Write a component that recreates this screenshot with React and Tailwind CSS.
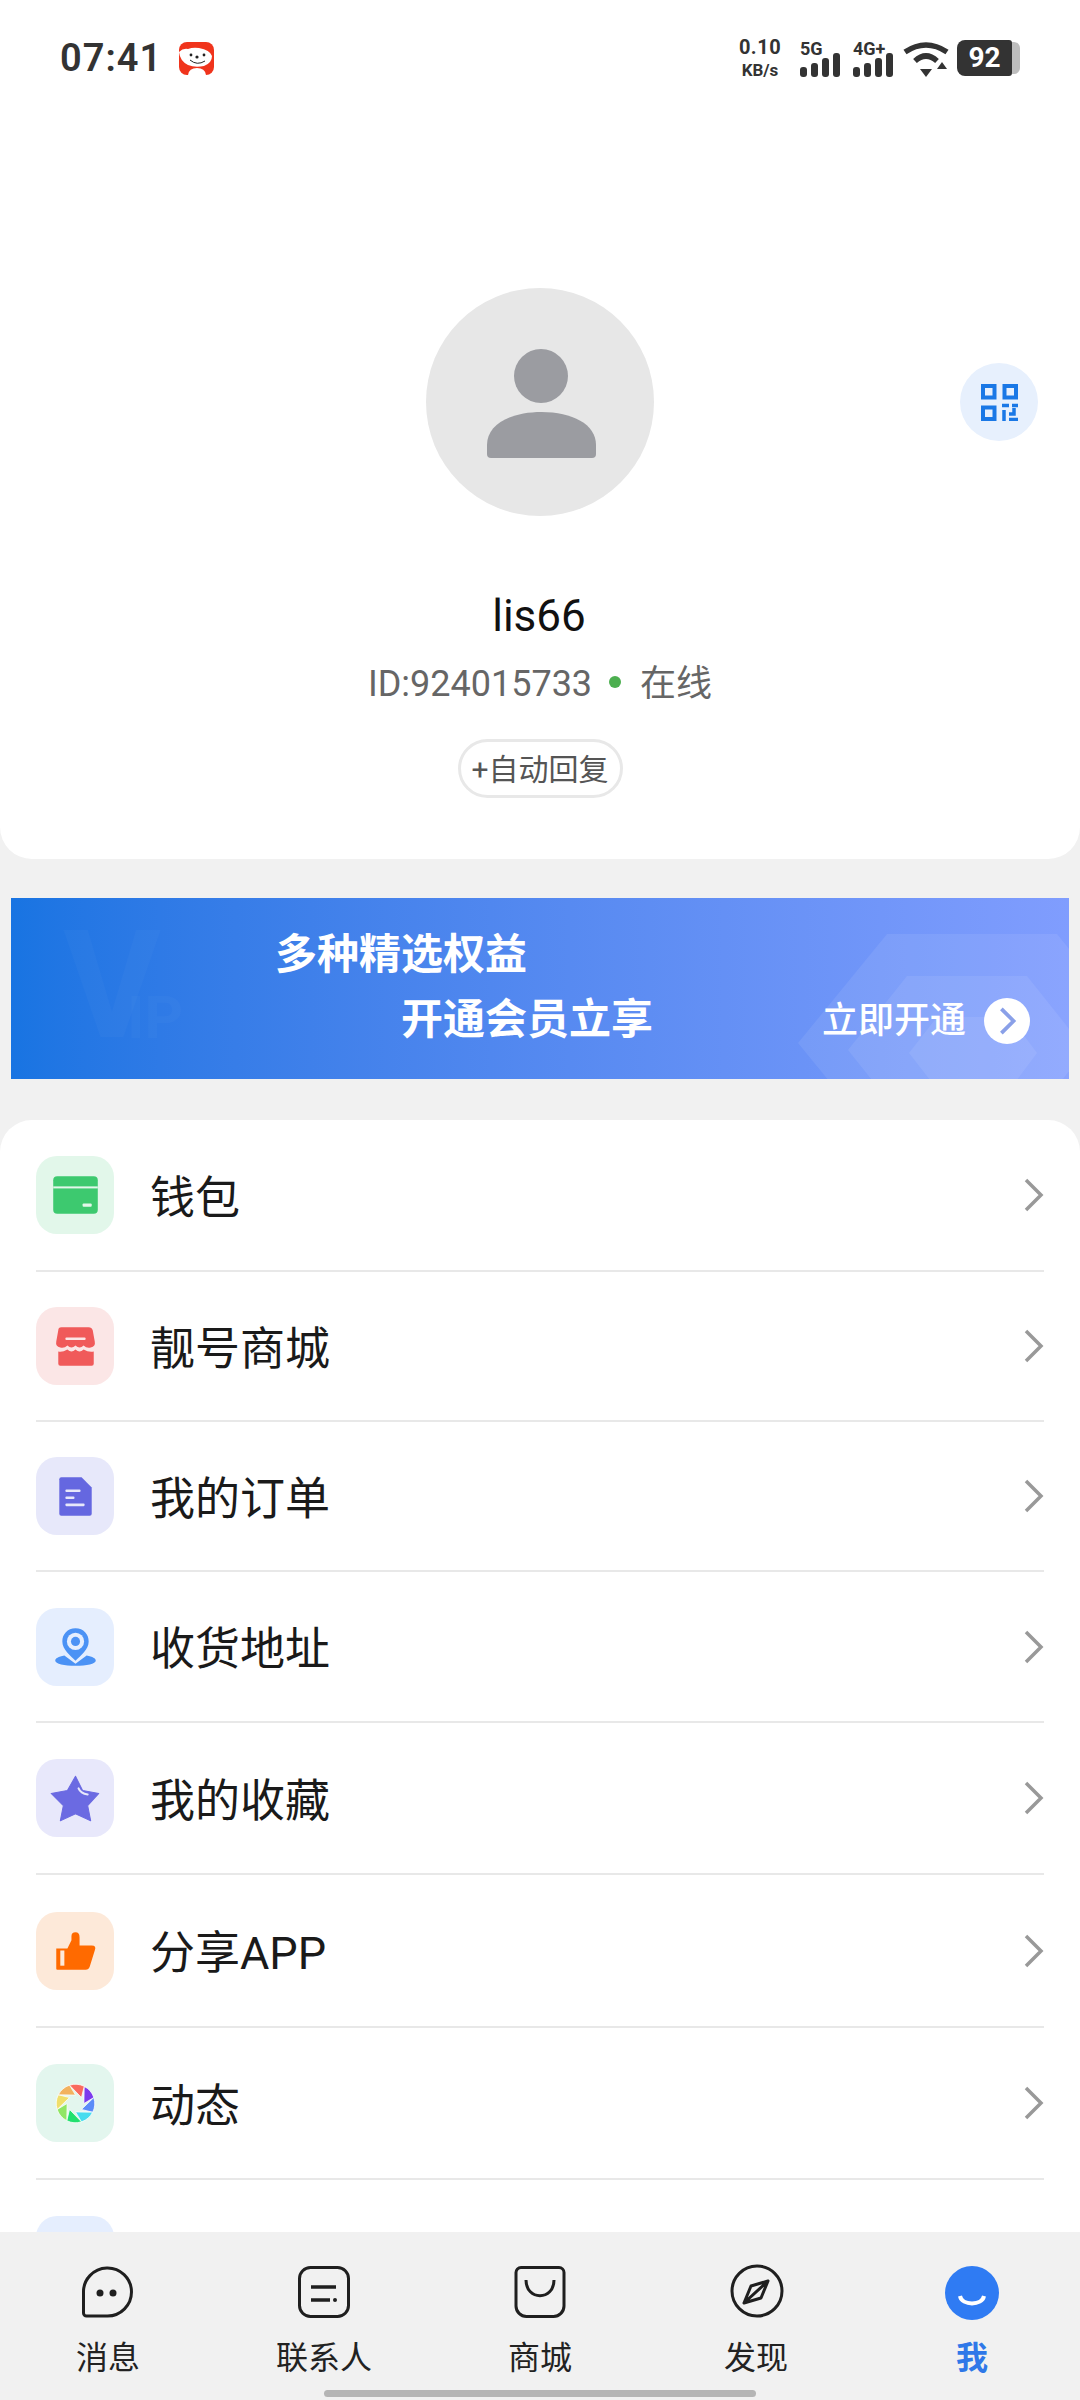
import React from 'react';

const rows = [
  { key: 'wallet', label: '钱包', bg: 'bg-[#e2f7ea]', h: 'h-[152px]' },
  { key: 'shop', label: '靓号商城', bg: 'bg-[#fbe6e6]', h: 'h-[150px]' },
  { key: 'order', label: '我的订单', bg: 'bg-[#e7e8fa]', h: 'h-[150px]' },
  { key: 'address', label: '收货地址', bg: 'bg-[#e5eefe]', h: 'h-[151px]' },
  { key: 'star', label: '我的收藏', bg: 'bg-[#e8e8fb]', h: 'h-[152px]' },
  { key: 'share', label: '分享APP', bg: 'bg-[#fde9d9]', h: 'h-[153px]' },
  { key: 'moments', label: '动态', bg: 'bg-[#e3f6ee]', h: 'h-[152px]' },
];

const blades = ['#7c3aed', '#5b8cf8', '#46dcef', '#22e06f', '#90e665', '#f0de6a', '#f2b25f', '#f96a5e'];

const RowIcon = ({ name }) => {
  if (name === 'wallet') {
    return (
      <svg viewBox="0 0 77 77" className="w-full h-full">
        <rect x="17" y="20" width="44" height="37" rx="4" fill="#3dc96f" />
        <rect x="17" y="30" width="44" height="2" fill="#e2f7ea" />
        <rect x="46" y="47" width="9" height="3" rx="1" fill="#e2f7ea" />
      </svg>
    );
  }
  if (name === 'shop') {
    return (
      <svg viewBox="0 0 77 77" className="w-full h-full">
        <path d="M25 20 H52 Q55 20 56 23 L58 34 Q59 39 54 40 Q50 41 47 38 Q43 42 39 38 Q35 42 31 38 Q28 41 24 40 Q19 39 20 34 L22 23 Q22 20 25 20 Z" fill="#f05a5a" />
        <path d="M22 44 Q26 45 31 42 Q35 46 39 42 Q43 46 47 42 Q52 45 57 44 V56 Q57 58 55 58 H24 Q22 58 22 56 Z" fill="#f05a5a" />
        <rect x="29" y="30" width="20" height="2.5" rx="1" fill="#fbe6e6" />
      </svg>
    );
  }
  if (name === 'order') {
    return (
      <svg viewBox="0 0 77 77" className="w-full h-full">
        <path d="M25 20 H45 L55 30 V56 Q55 58 53 58 H25 Q23 58 23 56 V22 Q23 20 25 20 Z" fill="#6567e0" />
        <rect x="29" y="32" width="15" height="2.5" rx="1" fill="#e7e8fa" />
        <rect x="29" y="39" width="9" height="2.5" rx="1" fill="#e7e8fa" />
        <rect x="29" y="46" width="19" height="2.5" rx="1" fill="#e7e8fa" />
      </svg>
    );
  }
  if (name === 'address') {
    return (
      <svg viewBox="0 0 77 77" className="w-full h-full">
        <path d="M28 47 C22 48 19 50 19 52 C19 55 28 57 39 57 C50 57 59 55 59 52 C59 50 56 48 50 47 L39 55 Z" fill="#4b92f5" />
        <path d="M39 20 C31 20 26 26 26 33 C26 41 34 47 39 52 C44 47 52 41 52 33 C52 26 47 20 39 20 Z" fill="#4b92f5" />
        <circle cx="39" cy="33" r="8.5" fill="#e5eefe" />
        <circle cx="39" cy="33" r="4.5" fill="#4b92f5" />
      </svg>
    );
  }
  if (name === 'star') {
    return (
      <svg viewBox="0 0 77 77" className="w-full h-full">
        <path d="M39 17 L46 31 L62 34 L51 46 L54 61 L39 54 L24 61 L27 46 L15 34 L31 31 Z" fill="#6b6ae2" stroke="#6b6ae2" strokeWidth="1" strokeLinejoin="round" />
        <path d="M42 29 Q44 34 51 35" stroke="#e8e8fb" strokeWidth="2" fill="none" strokeLinecap="round" />
      </svg>
    );
  }
  if (name === 'share') {
    return (
      <svg viewBox="0 0 77 77" className="w-full h-full">
        <path d="M20 36 H31 L35 28 V24 Q35 20 39 20 Q43 20 43 25 V33 H55 Q60 33 58 38 L53 54 Q52 57 49 57 H21 Q20 57 20 56 Z" fill="#ff6a00" />
        <rect x="24" y="38" width="4" height="15" fill="#fde9d9" />
      </svg>
    );
  }
  return (
    <svg viewBox="0 0 77 77" className="w-full h-full">
      {blades.map((color, i) => (
        <path
          key={color}
          d="M47.6 22.1 A19 19 0 0 1 57.1 33.1 L47.3 39 Z"
          fill={color}
          stroke="#ffffff"
          strokeWidth="0.7"
          transform={`rotate(${i * 45} 39 39)`}
        />
      ))}
    </svg>
  );
};

const Signal = ({ label, w }) => (
  <div className={`flex flex-col ${w}`}>
    <span className="text-[18px] leading-none font-bold text-[#333] h-[16px]">{label}</span>
    <svg viewBox="0 0 40 24" className="w-[40px] h-[24px] mt-[-3px]">
      <rect x="0" y="14" width="7" height="10" rx="3" fill="#333" />
      <rect x="11" y="10" width="7" height="14" rx="3" fill="#333" />
      <rect x="22" y="5" width="7" height="19" rx="3" fill="#333" />
      <rect x="33" y="0" width="7" height="24" rx="3" fill="#333" />
    </svg>
  </div>
);

const StatusBar = () => (
  <div className="w-full h-[116px] pl-[60px] pr-[60px] flex items-center justify-between">
    <div className="flex items-center gap-[17px]">
      <span className="text-[38px] leading-none font-semibold text-[#333] tracking-[1px]">07:41</span>
      <svg viewBox="0 0 35 33" className="w-[35px] h-[33px]">
        <rect width="35" height="33" rx="8" fill="#f0341c" />
        <path d="M0 10 Q4 6 9 7 Q14 5 20 6 Q31 8 33 14 Q33 21 25 24 Q16 26 9 23 Q1 19 0 10 Z" fill="#ffffff" />
        <path d="M9 33 Q10 26 18 26 Q26 26 27 33 Z" fill="#ffffff" />
        <circle cx="12" cy="13" r="1.4" fill="#222" />
        <circle cx="25" cy="13" r="1.4" fill="#222" />
        <circle cx="18" cy="15" r="1.6" fill="#222" />
        <path d="M11 18 Q18 24 26 19" stroke="#222" strokeWidth="1" fill="none" />
      </svg>
    </div>
    <div className="flex items-center">
      <div className="flex flex-col items-center w-[44px] font-bold text-[#333] leading-none mr-[18px]">
        <span className="text-[20px] tracking-[0.5px]">0.10</span>
        <span className="text-[17px] mt-[5px]">KB/s</span>
      </div>
      <Signal label="5G" w="w-[40px] mr-[13px]" />
      <Signal label="4G+" w="w-[40px] mr-[10px]" />
      <svg viewBox="0 0 46 36" className="w-[46px] h-[36px] mr-[8px] mt-[2px]">
        <path d="M2 11 Q23 -3 44 11" stroke="#333" strokeWidth="5.5" fill="none" />
        <path d="M12 20 Q23 10 34 20" stroke="#333" strokeWidth="5.5" fill="none" />
        <path d="M17 28 H29 L23 36 Z" fill="#333" />
        <path d="M39 21 L44 28 H34 Z" fill="#333" />
      </svg>
      <div className="flex items-center">
        <div className="w-[55px] h-[36px] bg-[#333] rounded-l-[8px] rounded-r-[3px] flex items-center justify-center text-white text-[28px] font-bold leading-none">92</div>
        <div className="w-[8px] h-[32px] bg-[#bdbdbd] rounded-r-[6px]" />
      </div>
    </div>
  </div>
);

const Profile = () => (
  <section className="h-[859px] bg-white rounded-b-[32px] flex flex-col items-center">
    <StatusBar />
    <div className="w-full mt-[172px] grid grid-cols-[1fr_228px_1fr] items-center">
      <div />
      <div className="w-[228px] h-[228px] rounded-full bg-[#e7e7e7]">
        <svg viewBox="0 0 228 228" className="w-full h-full">
          <circle cx="115" cy="88" r="27" fill="#9b9ca1" />
          <path d="M61 166 V157 C61 136 85 124 115.5 124 C146 124 170 136 170 157 V166 A4 4 0 0 1 166 170 H65 A4 4 0 0 1 61 166 Z" fill="#9b9ca1" />
        </svg>
      </div>
      <div className="flex justify-end pr-[42px]">
        <div className="w-[78px] h-[78px] rounded-full bg-[#e7f0fd] flex items-center justify-center">
          <svg viewBox="0 0 37 37" className="w-[37px] h-[37px]" fill="none" stroke="#1a78e6" strokeWidth="4">
            <rect x="2" y="2" width="11.5" height="11.5" />
            <rect x="23.5" y="2" width="11.5" height="11.5" />
            <rect x="2" y="23.5" width="11.5" height="11.5" />
            <path d="M21 21.5 H28 M31 21.5 H37 M23 37 V26 M28 30 H33 V24 M28 35.5 H37" strokeWidth="3.5" />
          </svg>
        </div>
      </div>
    </div>
    <div className="mt-[78px] pr-[2px] text-[44px] leading-none text-[#111]">lis66</div>
    <div className="mt-[28px] flex items-center text-[36px] leading-none text-[#666]">
      <span>ID:924015733</span>
      <span className="w-[12px] h-[12px] rounded-full bg-[#4caf50] ml-[17px] mr-[19px] mt-[-4px]" />
      <span>在线</span>
    </div>
    <div className="mt-[37px] h-[59px] w-[165px] rounded-full border-[3px] border-[#e8e8e8] pt-[2px] flex items-center justify-center text-[30px] leading-none text-[#555]">
      +自动回复
    </div>
  </section>
);

const Banner = () => (
  <section className="relative mx-[11px] mt-[39px] h-[181px] overflow-hidden bg-linear-to-r from-[#1874e2] to-[#809dfe] pt-[36px] text-white">
    <svg viewBox="0 0 1058 181" className="absolute inset-0 w-[1058px] h-[181px]">
      <path d="M787 145 L876 36 H1046 L1135 145 L1046 254 H876 Z" fill="#ffffff" opacity="0.08" />
      <path d="M837 152 L896 78 H1016 L1075 152 L1016 226 H896 Z" fill="#ffffff" opacity="0.08" />
      <path d="M898 155 L926 119 H999 L1026 155 L999 191 H926 Z" fill="#ffffff" opacity="0.08" />
    </svg>
    <span className="absolute left-[52px] top-[13px] text-[150px] leading-[1] font-bold text-white/[0.025]">V</span>
    <span className="absolute left-[116px] top-[90px] text-[60px] leading-[1] font-bold text-white/[0.025]">IP</span>
    <div className="relative pl-[264px] text-[42px] leading-none font-bold">多种精选权益</div>
    <div className="relative mt-[23px] h-[42px] pl-[390px] pr-[39px] flex items-center">
      <span className="text-[42px] leading-none font-bold">开通会员立享</span>
      <div className="ml-auto flex items-center gap-[18px] pt-[2px]">
        <span className="text-[36px] leading-none font-medium">立即开通</span>
        <div className="w-[46px] h-[46px] rounded-full bg-white flex items-center justify-center">
          <svg viewBox="0 0 24 32" className="w-[24px] h-[30px]">
            <path d="M6 3 L19 16 L6 29" stroke="#8aa0e8" strokeWidth="4" fill="none" />
          </svg>
        </div>
      </div>
    </div>
  </section>
);

const MenuList = () => (
  <section className="mt-[41px] bg-white rounded-t-[32px] px-[36px]">
    {rows.map((row) => (
      <div key={row.key} className={`${row.h} border-b-2 border-[#e8e8e8] flex items-center`}>
        <div className={`w-[78px] h-[78px] rounded-[21px] ${row.bg}`}>
          <RowIcon name={row.key} />
        </div>
        <span className="ml-[36px] pt-[6px] text-[45px] leading-none text-[#1a1a1a]">{row.label}</span>
        <svg viewBox="0 0 20 34" className="ml-auto w-[20px] h-[34px]">
          <path d="M2 2 L17 17 L2 32" stroke="#999" strokeWidth="3.5" fill="none" />
        </svg>
      </div>
    ))}
    <div className="pt-[36px]">
      <div className="w-[78px] h-[78px] rounded-[21px] bg-[#e5eefe]" />
    </div>
  </section>
);

const TabIcon = ({ name }) => {
  const stroke = { stroke: '#1f1f1f', strokeWidth: 3, fill: 'none' };
  if (name === 'chat') {
    return (
      <svg viewBox="0 0 54 54" className="w-[54px] h-[54px] ml-[-2px]">
        <path d="M3.5 29 A24 24 0 1 1 27.5 52 H6.5 A3 3 0 0 1 3.5 49 Z" {...stroke} />
        <circle cx="20" cy="29" r="3.5" fill="#1f1f1f" />
        <circle cx="33" cy="29" r="3.5" fill="#1f1f1f" />
      </svg>
    );
  }
  if (name === 'contacts') {
    return (
      <svg viewBox="0 0 54 54" className="w-[54px] h-[54px]">
        <rect x="2.5" y="3.5" width="49" height="49" rx="11" {...stroke} />
        <path d="M14 23 H39 M14 36 H33" stroke="#1f1f1f" strokeWidth="3.5" fill="none" />
        <circle cx="38" cy="36" r="2" fill="#1f1f1f" />
      </svg>
    );
  }
  if (name === 'mall') {
    return (
      <svg viewBox="0 0 54 54" className="w-[54px] h-[54px]">
        <path d="M8 3.5 H46 A5 5 0 0 1 51 8.5 V42 A10.5 10.5 0 0 1 40.5 52.5 H13.5 A10.5 10.5 0 0 1 3 42 V8.5 A5 5 0 0 1 8 3.5 Z" {...stroke} />
        <path d="M13 16 C13 37 41 37 41 16" {...stroke} />
      </svg>
    );
  }
  if (name === 'discover') {
    return (
      <svg viewBox="0 0 54 54" className="w-[54px] h-[54px] ml-[2px]">
        <circle cx="27" cy="27" r="25" {...stroke} />
        <path d="M38 17 L14 39 L21 22 Z M38 17 L14 39 L31 34 Z" stroke="#1f1f1f" strokeWidth="3" fill="none" strokeLinejoin="round" />
      </svg>
    );
  }
  return (
    <svg viewBox="0 0 54 54" className="w-[54px] h-[54px] overflow-visible">
      <circle cx="27" cy="29" r="27" fill="#2f7bf3" />
      <path d="M15 32 C17 42 37 42 39 32" stroke="#ffffff" strokeWidth="4" fill="none" />
    </svg>
  );
};

const tabs = [
  { key: 'chat', label: '消息' },
  { key: 'contacts', label: '联系人' },
  { key: 'mall', label: '商城' },
  { key: 'discover', label: '发现' },
  { key: 'me', label: '我', active: true },
];

const TabBar = () => (
  <nav className="relative h-[168px] shrink-0 bg-[#f1f1f1] grid grid-cols-5">
    {tabs.map((tab) => (
      <div key={tab.key} className="flex flex-col items-center pt-[32px]">
        <TabIcon name={tab.key} />
        <span className={`mt-[24px] text-[32px] leading-none ${tab.active ? 'font-bold text-[#2f78e8]' : 'text-[#222]'}`}>
          {tab.label}
        </span>
      </div>
    ))}
    <div className="absolute bottom-[3px] left-1/2 -translate-x-1/2 w-[432px] h-[7px] rounded-full bg-[#b5b5b5]" />
  </nav>
);

export default function App() {
  return (
    <div className="w-[1080px] h-[2400px] flex flex-col overflow-hidden bg-[#f1f1f1] font-['Roboto','Noto_Sans_CJK_SC',sans-serif]">
      <main className="flex-1 min-h-0 overflow-hidden">
        <Profile />
        <Banner />
        <MenuList />
      </main>
      <TabBar />
    </div>
  );
}
